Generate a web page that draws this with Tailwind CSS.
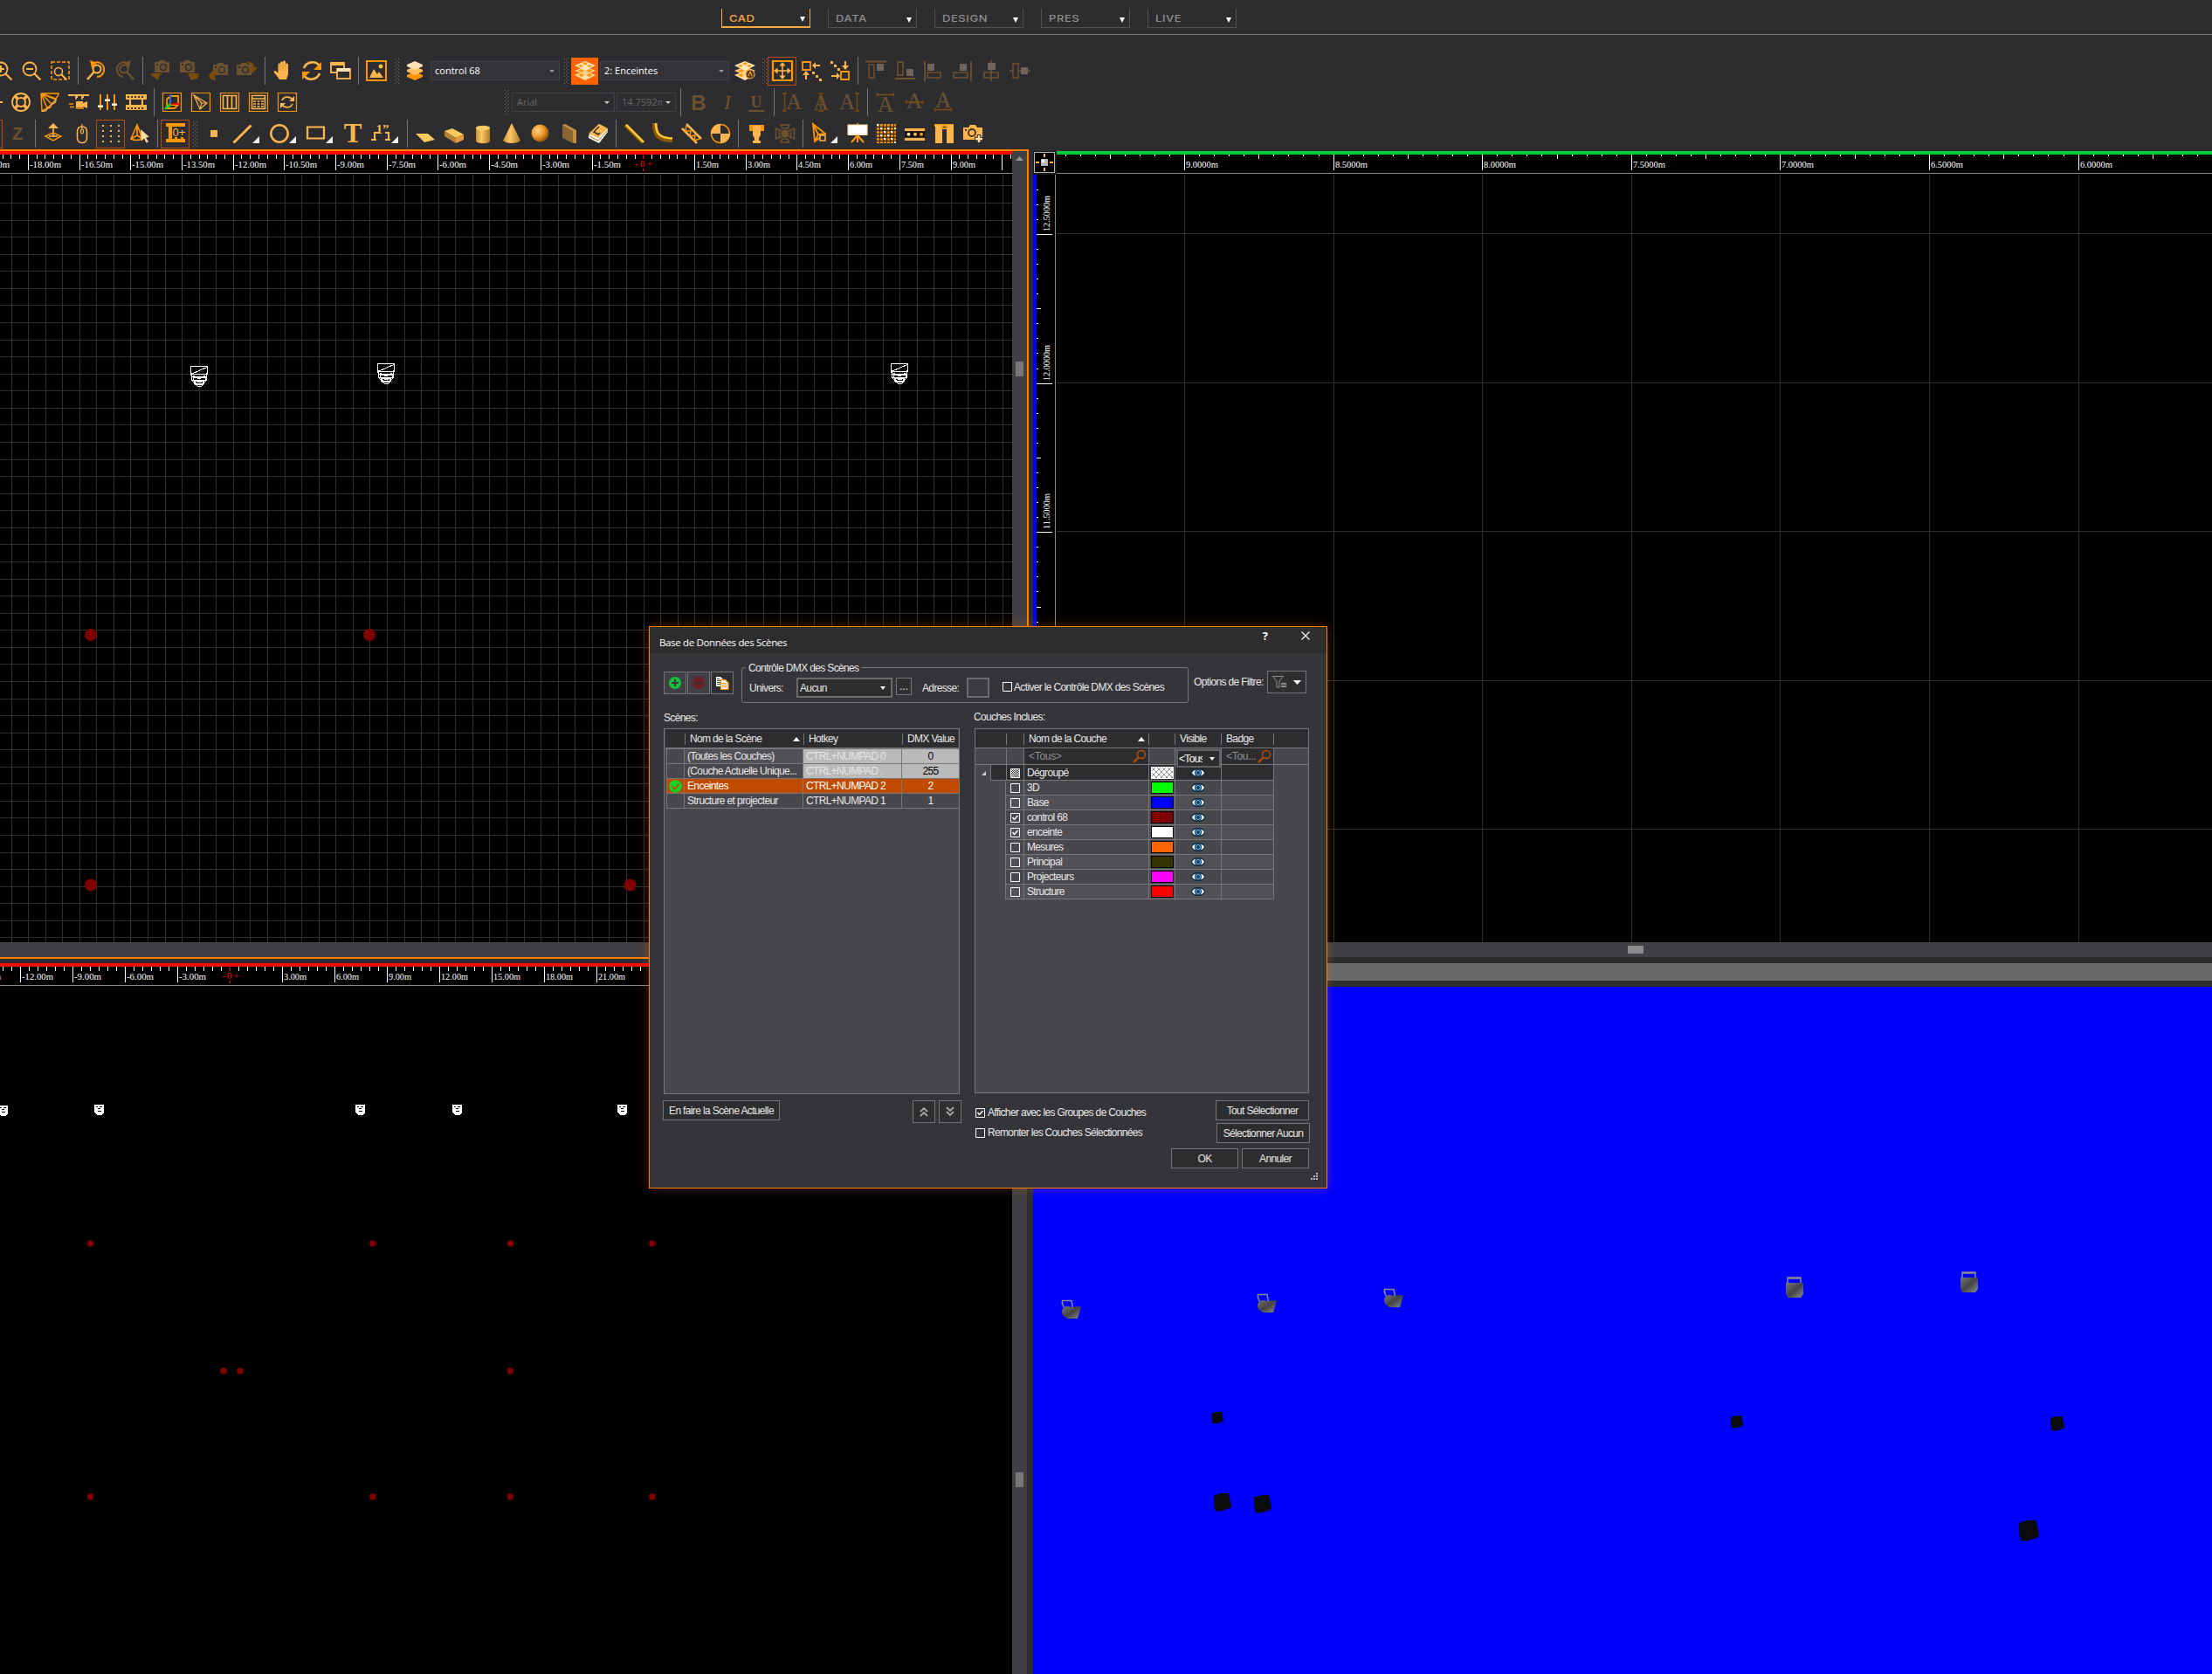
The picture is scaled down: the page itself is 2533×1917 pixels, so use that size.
<!DOCTYPE html>
<html lang="fr">
<head>
<meta charset="utf-8">
<title>Base de Données des Scènes</title>
<script src="https://cdn.jsdelivr.net/npm/@tailwindcss/browser@4"></script>
</head>
<body class="w-[2533px] h-[1917px] overflow-hidden bg-[#2d2d2f] relative font-['Liberation_Sans',sans-serif] text-xs text-[#e8e8e8]">

<svg class="absolute w-0 h-0">
  <defs>
    <linearGradient id="gold" x1="0" y1="0" x2="1" y2="0"><stop offset="0" stop-color="#c98f35"/><stop offset=".4" stop-color="#ffc865"/><stop offset="1" stop-color="#b37a2a"/></linearGradient>
    <radialGradient id="ball" cx=".35" cy=".35" r=".7"><stop offset="0" stop-color="#ffd28a"/><stop offset=".5" stop-color="#f39c2c"/><stop offset="1" stop-color="#8a4e08"/></radialGradient>
    <linearGradient id="steel" x1="0" y1="0" x2="1" y2="1"><stop offset="0" stop-color="#777"/><stop offset=".5" stop-color="#444"/><stop offset="1" stop-color="#8a8a8a"/></linearGradient>
    <pattern id="hatch" width="6" height="6" patternUnits="userSpaceOnUse"><rect width="6" height="6" fill="#fff"/><path d="M0 0l6 6M6 0l-6 6" stroke="#777" stroke-width=".8"/></pattern>
    <pattern id="dither" width="2" height="2" patternUnits="userSpaceOnUse"><rect width="2" height="2" fill="#fff"/><rect width="1" height="1" fill="#333"/><rect x="1" y="1" width="1" height="1" fill="#333"/></pattern>
    <pattern id="dots" width="4" height="4" patternUnits="userSpaceOnUse"><rect width="1" height="1" fill="#6c6c6c"/><rect x="2" y="2" width="1" height="1" fill="#6c6c6c"/></pattern>
  </defs>
</svg>

<header class="h-[171px] flex flex-col">
  <nav class="h-10 border-b border-[#757577] pl-[826px] flex items-end gap-5 pb-[7px] font-['Inter',sans-serif]" id="menu"></nav>
  <div class="h-[23px]"></div>
  <div id="row1" class="h-9 flex items-center -ml-[14px]"></div>
  <div id="row2" class="h-9 flex items-center -ml-[26px]"></div>
  <div id="row3" class="h-9 flex items-center -ml-[30px]"></div>
</header>

<main class="h-[1746px] flex flex-col gap-[5px]">
  <div class="flex gap-[5px] h-[927px]">
    <section class="w-[1178px] border-t-2 border-r-2 border-b-2 border-[#ff8000] flex flex-col">
      <div class="flex h-[906px]">
        <svg id="plan" width="1159" height="906" viewBox="0 173 1159 906" class="bg-black shrink-0" shape-rendering="crispEdges"></svg>
        <div class="w-[17px] bg-[#414044] flex flex-col items-center">
          <svg width="9" height="5" viewBox="0 0 9 5" class="mt-[6px]"><path d="M4.500 0L9 5H0z" fill="#999"/></svg>
          <div class="w-[9px] h-[17px] bg-[#777] mt-[230px]"></div>
        </div>
      </div>
      <div class="h-[17px] bg-[#414044]"></div>
    </section>
    <section class="w-[1350px] pt-[2px] flex flex-col">
      <svg id="side" width="1350" height="906" viewBox="1183 173 1350 906" class="bg-black shrink-0" shape-rendering="crispEdges"></svg>
      <div class="h-[17px] bg-[#414044] flex items-center"><div class="w-[18px] h-[9px] bg-[#8a8a8a] ml-[681px]"></div></div>
    </section>
  </div>
  <div class="flex h-[814px]">
    <svg id="front" width="1159" height="814" viewBox="0 1103 1159 814" class="bg-black shrink-0" shape-rendering="crispEdges"></svg>
    <div class="w-[17px] bg-[#414044] flex justify-center"><div class="w-[9px] h-[17px] bg-[#777] mt-[583px]"></div></div>
    <section class="ml-[7px] w-[1350px] flex flex-col">
      <div class="h-5 bg-[#69696a] mb-[7px]"></div>
      <svg id="view3d" width="1350" height="787" viewBox="1183 1130 1350 787" class="bg-[#0000ff]"></svg>
    </section>
  </div>
</main>

<div role="dialog" class="absolute left-[743px] top-[717px] w-[777px] h-[644px] border border-[#ff8000] bg-[#353438] shadow-[0_0_12px_rgba(255,110,0,0.3)] tracking-[-0.65px] leading-[14px]">
  <div class="h-[30px] bg-[#2d2d2e] flex items-start pl-[11px] text-white">
    <span class="mt-[11px] w-[692px] font-['Open_Sans',sans-serif] text-[11.500px] tracking-[-0.350px]">Base de Données des Scènes</span>
    <span class="mt-[3px] font-['Open_Sans',sans-serif] text-[13px] font-bold w-[43px] text-center -ml-[20px]">?</span>
    <svg class="mt-[5px] ml-[20px]" width="10" height="10" viewBox="0 0 10 10"><path d="M.5.5l9 9M9.500.5l-9 9" stroke="#fff" stroke-width="1.200"/></svg>
  </div>

  <div class="h-[62px] pl-4 flex items-start">
    <div class="flex gap-px mt-[21px]">
      <button class="w-[26px] h-[26px] border border-[#747376] bg-[#414044] flex items-center justify-center"><svg width="14" height="14" viewBox="0 0 14 14"><circle cx="7" cy="7" r="7" fill="#0fc43c"/><path d="M7 3v8M3 7h8" stroke="#353438" stroke-width="2"/></svg></button>
      <button class="w-[26px] h-[26px] border border-[#747376] bg-[#414044] flex items-center justify-center"><svg width="14" height="14" viewBox="0 0 14 14"><circle cx="7" cy="7" r="7" fill="#6e1f22"/><path d="M3 7h8" stroke="#353438" stroke-width="2"/></svg></button>
      <button class="w-[26px] h-[26px] border border-[#747376] bg-[#2f2f31] flex items-center justify-center"><svg width="16" height="16" viewBox="0 0 16 16"><path d="M1 1h5l3 3v8H1z" fill="#fff"/><path d="M2 3.500h3M2 5.500h5M2 7.500h5M2 9.500h5" stroke="#555"/><path d="M6.500 4.500h5l3.500 3.500v7.500H6.500z" fill="#fff" stroke="#ff9500" stroke-width="1.300"/><path d="M8 8.500h4M8 10.500h5.500M8 12.500h5.500" stroke="#ff9500"/></svg></button>
    </div>
    <div class="relative ml-[9px] mt-[16px] w-[512px] h-[41px] border border-[#77767a] rounded-[3px] flex items-start pt-[11px] pl-[8px]">
      <span class="absolute left-[4px] -top-[7px] bg-[#353438] px-[3px]">Contrôle DMX des Scènes</span>
      <span class="w-[54px] mt-[5px]">Univers:</span>
      <span class="w-[110px] h-[23px] border-2 border-[#6c6b6e] bg-[#2d2d2f] flex items-center justify-between pl-[2px] pr-[6px]">Aucun<svg width="6" height="4" viewBox="0 0 6 4"><path d="M0 0h6L3 4z" fill="#fff"/></svg></span>
      <span class="ml-[4px] w-[18px] h-5 border border-[#747376] bg-[#2f2f31] text-center tracking-normal leading-[18px]">...</span>
      <span class="ml-[12px] w-[51px] mt-[5px]">Adresse:</span>
      <span class="w-[26px] h-[23px] border-2 border-[#6c6b6e] bg-[#3b3a3e]"></span>
      <span class="ml-[15px] mt-[5px] w-[11px] h-[11px] border border-white"></span>
      <span class="ml-[2px] mt-[4px] whitespace-nowrap">Activer le Contrôle DMX des Scènes</span>
    </div>
    <span class="ml-[6px] mt-[26px] w-[84px] whitespace-nowrap">Options de Filtre:</span>
    <button class="mt-[20px] w-[45px] h-[26px] border border-[#747376] bg-[#2f2f31] flex items-center pl-[5px] gap-[8px]">
      <svg width="16" height="14" viewBox="0 0 16 14" fill="none" stroke="#8f8f8f"><path d="M.5.5h12L8 6v7H5V6z"/><path d="M10 9h6M10 12h6" stroke-width="2"/></svg>
      <svg width="9" height="5" viewBox="0 0 9 5"><path d="M0 0h9L4.500 5z" fill="#fff"/></svg>
    </button>
  </div>

  <div class="h-[24px] pl-4 flex">
    <span class="w-[355px] mt-[5px]">Scènes:</span>
    <span class="mt-[4px]">Couches Inclues:</span>
  </div>

  <div class="pl-4 flex items-start gap-[17px]">
    <div class="w-[339px] h-[419px] border border-[#77767a] bg-[#48474b]">
      <div class="h-[23px] mx-px pl-[2px] pt-px bg-[#2d2d2f] border-b-2 border-[#77767a] grid grid-cols-[21px_136px_113px_64px] items-center">
        <span class="h-[13px] border-r border-[#77767a]"></span>
        <span class="h-[13px] border-r border-[#77767a] pl-[5px] pr-[4px] flex items-center justify-between">Nom de la Scène<svg width="8" height="5" viewBox="0 0 8 5"><path d="M4 0L8 5H0z" fill="#fff"/></svg></span>
        <span class="h-[13px] border-r border-[#77767a] pl-[5px] flex items-center">Hotkey</span>
        <span class="pl-[5px] whitespace-nowrap">DMX Value</span>
      </div>
      <div id="scenes" class="ml-[2px]"></div>
    </div>
    <div class="w-[383px] h-[418px] border border-[#77767a] bg-[#48474b]">
      <div class="h-[22px] pt-px bg-[#2d2d2f] border-b border-[#77767a] grid grid-cols-[36px_20px_143px_30px_53px_60px_39px] items-center">
        <span class="h-[13px] border-r border-[#77767a]"></span>
        <span class="h-[13px] border-r border-[#77767a]"></span>
        <span class="h-[13px] border-r border-[#77767a] pl-[5px] pr-[4px] flex items-center justify-between">Nom de la Couche<svg width="8" height="5" viewBox="0 0 8 5"><path d="M4 0L8 5H0z" fill="#fff"/></svg></span>
        <span class="h-[13px] border-r border-[#77767a]"></span>
        <span class="h-[13px] border-r border-[#77767a] pl-[5px] flex items-center">Visible</span>
        <span class="h-[13px] border-r border-[#77767a] pl-[5px] flex items-center">Badge</span>
      </div>
      <div class="h-[19px] border-b border-[#77767a] grid grid-cols-[36px_20px_143px_30px_53px_60px_39px] text-[#8f8f90]">
        <span class="border-r border-[#77767a]"></span>
        <span class="border-r border-[#77767a]"></span>
        <span class="border-r border-[#77767a] pl-[5px] pr-[2px] flex items-center justify-between bg-[#2d2d2f] tracking-[-0.300px]">&lt;Tous&gt;<svg width="16" height="16" viewBox="0 0 16 16" fill="none" stroke="#c04c00"><circle cx="10" cy="6" r="4.600" stroke-width="1.500"/><path d="M6.500 9.500L1 15" stroke-width="2"/></svg></span>
        <span class="border-r border-[#77767a]"></span>
        <span class="border-r border-[#77767a] relative"><span class="absolute left-px top-px w-[51px] h-[21px] z-10 border-2 border-[#606063] bg-[#2d2d2f] text-white flex items-center pl-px"><span class="w-[27px] overflow-hidden">&lt;Tous&gt;</span><svg class="ml-[8px] shrink-0" width="6" height="4" viewBox="0 0 6 4"><path d="M0 0h6L3 4z" fill="#fff"/></svg></span></span>
        <span class="border-r border-[#77767a] pl-[5px] pr-[2px] flex items-center justify-between bg-[#2d2d2f] tracking-[-0.300px]">&lt;Tou...<svg class="shrink-0" width="16" height="16" viewBox="0 0 16 16" fill="none" stroke="#c04c00"><circle cx="10" cy="6" r="4.600" stroke-width="1.500"/><path d="M6.500 9.500L1 15" stroke-width="2"/></svg></span>
      </div>
      <div id="layers"></div>
    </div>
  </div>

  <div class="pl-[15px] flex items-start h-[108px]">
    <button class="mt-[7px] w-[134px] h-[23px] border border-[#747376] bg-[#2d2d2f] whitespace-nowrap">En faire la Scène Actuelle</button>
    <div class="flex gap-[4px] ml-[152px] mt-[7px]">
      <button class="w-[26px] h-[26px] border border-[#747376] bg-[#2f2f31] flex items-center justify-center"><svg width="12" height="12" viewBox="0 0 12 12" fill="none" stroke="#a8a8a8" stroke-width="1.800"><path d="M2 6l4-4 4 4M2 11l4-4 4 4"/></svg></button>
      <button class="w-[26px] h-[26px] border border-[#747376] bg-[#2f2f31] flex items-center justify-center"><svg width="12" height="12" viewBox="0 0 12 12" fill="none" stroke="#a8a8a8" stroke-width="1.800"><path d="M2 1l4 4 4-4M2 6l4 4 4-4"/></svg></button>
    </div>
    <div class="ml-[16px] w-[224px] pt-[14px] flex flex-col gap-[9px]">
      <label class="flex items-center gap-[3px] h-[14px]"><svg width="11" height="11" viewBox="0 0 11 11" fill="none" stroke="#fff"><path d="M.5.5h10v10H.5z"/><path d="M2.500 5l2 2.500 4-4.500" stroke-width="1.400"/></svg>Afficher avec les Groupes de Couches</label>
      <label class="flex items-center gap-[3px] h-[14px] tracking-[-0.7px]"><svg width="11" height="11" viewBox="0 0 11 11" fill="none" stroke="#fff"><path d="M.5.5h10v10H.5z"/></svg>Remonter les Couches Sélectionnées</label>
    </div>
    <div class="w-[159px] pt-[7px] flex flex-col items-end">
      <button class="w-[107px] h-[23px] mr-px border border-[#747376] bg-[#2d2d2f]">Tout Sélectionner</button>
      <button class="w-[107px] h-[23px] mt-[3px] border border-[#747376] bg-[#2d2d2f] whitespace-nowrap">Sélectionner Aucun</button>
      <div class="flex gap-[4px] mt-[6px] mr-px">
        <button class="w-[77px] h-[23px] border border-[#747376] bg-[#2d2d2f]">OK</button>
        <button class="w-[77px] h-[23px] border border-[#747376] bg-[#2d2d2f]">Annuler</button>
      </div>
      <svg class="mt-[5px] -mr-[9px] shrink-0" width="8" height="8" viewBox="0 0 8 8" fill="#b8b8b8"><path d="M6 0h2v2H6zM6 3h2v2H6zM6 6h2v2H6zM3 3h2v2H3zM3 6h2v2H3zM0 6h2v2H0z"/></svg>
    </div>
  </div>
</div>

<script>
const $ = id => document.getElementById(id);
const L = '#ffb54d', O = '#ff9500', M = '#6e5230';

/* ---------- workspace tabs ---------- */
$('menu').innerHTML = ['CAD','DATA','DESIGN','PRES','LIVE'].map((t,i) => `
  <div class="${i ? 'w-[102px] h-[22px] border-b border-x border-[#515153] text-[#8e8e90]' : 'w-[102px] h-[22px] border-b-2 border-x border-[#ffab40] text-[#ffab40]'} flex items-center justify-between pl-[8px] pr-[5px] text-[11px] font-medium">
    <span class="tracking-[0.500px] scale-x-[1.180] origin-left mt-[2px]">${t}</span><svg width="6" height="6" viewBox="0 0 6 6" class="mt-[4px]"><path d="M0 0h6L3 6z" fill="#fff"/></svg></div>`).join('');

/* ---------- toolbar icons, 24 x 24 ---------- */
const s = (d, c = L, w = 2, x = '') => `<path d="${d}" fill="none" stroke="${c}" stroke-width="${w}" ${x}/>`;
const f = (d, c = L) => `<path d="${d}" fill="${c}"/>`;
const frame = s('M1.500 1.500h21v21h-21z', O, 1.200);
const tx = (t, x, y, z, c, fam = 'Liberation Serif', x2 = '') => `<text x="${x}" y="${y}" font-size="${z}" fill="${c}" text-anchor="middle" font-family="${fam}" ${x2}>${t}</text>`;
const lens = (c, m='') => `<circle cx="10" cy="10" r="7.500" fill="none" stroke="${c}" stroke-width="1.800"/>` + s('M15.500 15.500l7 7', c, 2.200) + m;
const cam = (x, y) => f(`M${x} ${y+2}h4l2-2h5l2 2h4v12h-17z`, M) + `<circle cx="${x+10}" cy="${y+8}" r="3.500" fill="none" stroke="#2d2d2f" stroke-width="1.500"/><rect x="${x+2}" y="${y+4}" width="2" height="2" fill="#2d2d2f"/>`;
const stack = (a, b, c) => f('M3 17l9-4 9 4v2l-9 4-9-4z', c) + f('M3 11l9-4 9 4v2l-9 4-9-4z', b) + f('M3 5l9-4 9 4v2l-9 4-9-4z', a);
const holes = (dx = 0) => f('M0 17l12-5 12 5-12 6z', '#ffe0ac') + f('M4 17l4-2 3 2-3 2zM13 17l4-2 3 2-3 2z', O) + f('M0 12l12-5 12 5-12 5z', '#ffd08a') + f('M4 12l4-2 3 2-3 2zM13 12l4-2 3 2-3 2z', O) + f('M0 6l12-5 12 5-12 6z', '#ffe6bf') + f('M9 4l3-2 3 2-3 1.500zM4 6.500l3-1.500 3 1.500-3 1.500zM14 6.500l3-1.500 3 1.500-3 1.500z', O);
const I = {
  zin: lens(L, s('M6 10h8M10 6v8')), zout: lens(L, s('M6 10h8')),
  zreg: s('M2 2h20v20H2z', O, 1.600, 'stroke-dasharray="4 2"') + `<circle cx="10" cy="13" r="4.500" fill="none" stroke="${L}" stroke-width="1.500"/>` + s('M13 16l6 6', L, 2),
  undo: `<circle cx="13" cy="10" r="4.500" fill="none" stroke="${L}" stroke-width="2"/>` + s('M10 13l-8 9', L, 2.500) + s('M8 4c6-4 14 0 13 8-.5 4-4 7-8 7', O, 2) + f('M5 0l2 9 6-6z', O),
  redo: `<circle cx="11" cy="10" r="4.500" fill="none" stroke="${M}" stroke-width="2"/>` + s('M14 13l8 9', M, 2.500) + s('M16 4C10 0 2 4 3 12c.5 4 4 7 7 7', M, 2) + f('M19 0l-2 9-6-6z', M),
  cam1: cam(5, 0) + f('M1 15h13l-3 2-2 6-8-6z', '#7a4c10'), cam2: cam(1, 0) + f('M10 15h13l-2 6-8 2-1-4z', '#7a4c10'),
  cam3: cam(6, 3) + f('M1 17l6-7 5 6-4 1 1 6-6-1z', '#7a4c10'), cam4: cam(0, 3) + f('M11 2c6-1 9 2 9 6h4l-6 7-5-6 4-1c0-2-2-3-6-6z', '#7a4c10'),
  hand: f('M8 22l-6-8c-1-1.500 1-2.500 2-1.500l2.500 2V5c0-2 2.500-2 2.500 0V3c0-2 3-2 3 0V2c0-2 3-2 3 0v3c0-2 3-2 3 0v11l-2 6z') + s('M9 5v7M12 3v9M15 4v8', '#c47c1c', .7),
  rot: s('M3 9c3-8 14-9 18-2M21 15c-3 8-14 9-18 2', L, 2.600) + f('M23 2v9h-9zM1 22v-9h9z', O),
  wins: s('M1 3h15v11H1z', L, 1.800) + f('M1 2h15v4H1z') + `<rect x="8" y="10" width="15" height="11" fill="#2d2d2f" stroke="${L}" stroke-width="1.800"/>` + f('M8 9h15v4H8z', '#ffe0b0'),
  pic: s('M1 1h22v22H1z', O, 2) + f('M4 20l5-10 4 6 2-3 5 7z') + `<circle cx="17" cy="7" r="2.500" fill="${L}"/>`,
  stack: stack('#ffe3b5', '#ffc062', '#ff9500'), holes: holes(),
  holesA: holes() + `<circle cx="18" cy="16" r="5" fill="#5b3c12" stroke="${L}"/>` + s('M16 18l2-5 2 5', L, 1),
  move: s('M1 1h22v22H1z', O, 2.200) + s('M12 5v14M5 12h14', L, 1.600) + f('M12 2l3.500 4.500h-7zM12 22l3.500-4.500h-7zM2 12l4.500-3.500v7zM22 12l-4.500-3.500v7z'),
  gp1: s('M2 2h9v9H2z', O, 1.800) + s('M22 6h-7M6 22v-7', L, 2) + f('M13 6l4-4v8zM6 12l4 5H2z') + f('M13 13h3v3h-3zM17 17h3v3h-3zM21 21h3v3h-3z'),
  gp2: s('M13 13h9v9h-9z', O, 1.800) + s('M18 1v7M2 18h7', L, 2) + f('M18 11l-4-5h8zM12 18l-4-4v8z') + f('M1 1h3v3H1zM5 5h3v3H5zM9 9h3v3H9z'),
  al1: s('M0 1.500h24', M, 2) + s('M4 5h6v15H4z', M, 1.500) + f('M13 4h8v8h-8z', '#6d655c'), al2: s('M1 21h23', M, 2) + s('M4 2h6v15H4z', M, 1.500) + f('M14 10h8v8h-8z', '#6d655c'),
  al3: s('M2 1v23', M, 1.800) + s('M5 14h15v6H5z', M, 1.500) + f('M5 4h8v8H5z', '#6d655c'), al4: s('M22 1v23', M, 1.800) + s('M2 14h16v6H2z', M, 1.500) + f('M9 4h8v8H9z', '#6d655c'),
  al5: s('M12 0v24', M, 1.600) + s('M4 14h16v6H4z', M, 1.500) + f('M8 3h9v8H8z', '#6d655c'), al6: s('M0 12h24', M, 1.600) + `<rect x="4" y="4" width="6" height="16" fill="#2d2d2f" stroke="${M}" stroke-width="1.500"/>` + f('M13 8h8v8h-8z', '#6d655c'),
  stub: f('M20 11h4v2h-4z'),
  buoy: `<circle cx="12" cy="12" r="10" fill="none" stroke="${L}" stroke-width="1.800"/><circle cx="12" cy="12" r="5" fill="none" stroke="${L}" stroke-width="2"/>` + s('M5 5l3.500 3.500M19 5l-3.500 3.500M5 19l3.500-3.500M19 19l-3.500-3.500', L, 3.500),
  fan: s('M2 2l1 20 6-3zM2 2l7 17 5-5zM2 2l12 12 5-5zM2 2l17 6 3-5V2z', O, 1.400) + s('M3 22c4 1 6-1 6-3M9 19c3 0 5-2 5-5M14 14c3 0 5-2 5-5', L, 1.400),
  proj: s('M0 4h24', L, 2) + s('M9 4v5M16 4v5', L, 1.500) + f('M9 11h8v7H9zM17 13l5-2v8l-5-2z') + s('M8 5.500h3M15 5.500h3', L, 3) + s('M1 14h5M2 17.500h5M9 19h9', O, 1.500),
  mix: s('M4 3v18M12 3v18M20 3v18', O, 2) + f('M1 15.500h6v2.500H1zM9 8.500h6V11H9zM17 13.500h6V16h-6z', '#fff0d8'),
  film: f('M0 3h24v18H0z') + f('M2 5h2v2H2zM6 5h2v2H6zM10 5h2v2h-2zM14 5h2v2h-2zM18 5h2v2h-2zM2 18h2v2H2zM6 18h2v2H6zM10 18h2v2h-2zM14 18h2v2h-2zM18 18h2v2h-2zM0 9h4v6H0zM6 9h12v6H6zM20 9h4v6h-4z', '#2d2d2f'),
  axes: frame + s('M6 9l4-4h9v10l-4 4H6zM10 5v10h9M6 19l4-4', O, 1.800) + s('M10 14V3', '#1266ff', 1.800) + s('M10 14h11', '#f00', 1.800) + s('M10 14l-6 6', '#0d2', 2.500),
  spot: frame + s('M4 4l15 9-8 7z', L, 1.200) + s('M4 4l9 9-2 7M13 13l6 0', L, 1.200),
  cols: frame + s('M4.500 4.500h15v15h-15zM9.500 4v16M14.500 4v16', L, 1.600),
  tbl: frame + s('M4.500 4.500h15v15h-15zM4 8h16', L, 1.500) + s('M6 11h12M6 14h12M6 17h12', L, 1.600, 'stroke-dasharray="3 1.500"'),
  sync: frame + s('M6 10c2-5 9-5 12-1M18 14c-2 5-9 5-12 1', L, 1.700) + f('M20 5v6h-6zM4 19v-6h6z'),
  B: tx('B', 12, 21, 24, M, 'Liberation Sans', 'font-weight="bold"'), Ii: tx('I', 12, 20, 24, M, 'Liberation Serif', 'font-style="italic"'), U: tx('U', 12, 18, 18, M, 'Liberation Serif', 'font-weight="bold"') + s('M3 22h18', M, 2),
  Al: s('M1 2h5M1 22h5M3.500 2v20', '#7a4c10', 1.500) + tx('A', 14, 20, 25, M), Ac: tx('A', 12, 21, 25, M) + s('M9 2h6M9 22h6M12 2v20', '#7a4c10', 1.500), Ar: tx('A', 9, 20, 25, M) + s('M18 2h5M18 22h5M20.500 2v20', '#7a4c10', 1.500),
  At: s('M2 3.500h20M2.500 1.500v4M21.500 1.500v4', '#7a4c10', 1.500) + tx('A', 12, 23, 25, M), Am: tx('A', 12, 19, 25, M) + s('M2 12h20M2.500 10v4M21.500 10v4', '#7a4c10', 1.500), Ab: tx('A', 12, 18, 25, M) + s('M2 20.500h20M2.500 18.500v4M21.500 18.500v4', '#7a4c10', 1.500),
  none: '', Z: tx('Z', 12, 19, 20, M, 'Liberation Sans', 'font-weight="bold"'),
  lift: s('M12 4v12', L, 1.600) + f('M12 0l6 6H6z') + s('M3 15l9-4 9 4-9 5z', O, 1.500) + s('M7 15h10', L, 1.500),
  mouse: s('M12 4c4 0 5.500 3 5.500 6v7c0 3-2 5.500-5.500 5.500S6.500 20 6.500 17v-7c0-3 1.500-6 5.500-6z', L, 1.600) + s('M12 1v7', L, 1.200) + `<rect x="10.500" y="7" width="3" height="5" rx="1.500" fill="none" stroke="${L}" stroke-width="1.200"/>`,
  grid: [2, 11, 20].map(x => [2, 8, 14, 20].map(y => f(`M${x} ${y}h2v2h-2z`)).join('')).join(''),
  cone: s('M9 2L2 18c3 2 9 2 13 0zM9 2l0 12-7 4M9 14l6 4', O, 1.600) + f('M13 7l10 9-4 .5 3 5-2.500 1-2.500-5-3 3z', '#ffdca4'),
  zero: f('M1 0h22v4H1zM1 18h22v4H1zM4 4h4v14H4zM11 16h3v3h-3zM18 16h3v3h-3z', O) + tx('0+', 16, 14.500, 13, L, 'Liberation Sans'),
  pt: f('M8 8h8v8H8z'), line: s('M1.500 22.500l20-20', L, 3), circ: `<circle cx="12" cy="12" r="9.700" fill="none" stroke="${L}" stroke-width="2.500"/>`,
  rect: s('M2 4.500h19v13H2z', L, 2.200), T: tx('T', 12, 22, 31, L, 'Liberation Serif', 'font-weight="bold"'),
  dim: s('M4 20V11h5M20 20V11h-4M0 19h6M16 19h6', L, 2) + tx('1”', 13, 12, 15, L, 'Liberation Serif', 'font-weight="bold"'),
  plane: f('M1 12l14 0 8 7-12 3z', '#ffc95c'),
  box: f('M1 9l9-3 13 7-9 4z', '#ffc95c') + f('M1 9l13 8v6L1 15z', '#b9802f') + f('M14 17l9-4v6l-9 4z', '#e09d3d'),
  cyl: `<path d="M4 5v16c3 3 13 3 16 0V5z" fill="url(#gold)"/><ellipse cx="12" cy="5.500" rx="8" ry="2.700" fill="#ffc962"/>`,
  con: `<path d="M12 0L2 20c4 4 16 4 20 0z" fill="url(#gold)"/>`, ball: `<circle cx="11.500" cy="11.500" r="10" fill="url(#ball)"/>`,
  wall: f('M4 2l3-1 13 7v15l-3 0z', '#c48f42') + f('M4 2l12 7v14L4 17z', '#8a6431'),
  book: f('M1 14l12-13 10 6v3L13 23 1 17z', '#fff') + f('M1 12L13 1l10 5L12 17z', L) + s('M13 4l-6 6 5 3 2-2', '#2d2d2f', 1.500) + s('M2 15l10 5 11-12', '#b4721c', 1),
  pipe: s('M2 2l20 20', '#7a4d00', 5) + s('M3 2l20 20', '#ffc83a', 2.500), bend: s('M3 0c0 14 4 19 20 19', '#8a5800', 6) + s('M4 0c0 13 5 17 19 17.500', '#ffc83a', 2.500),
  truss: s('M6 1l17 17M1 6l17 17', L, 2.500) + s('M6 3L5 9l6 0-1 6 6-1-1 6 6-2', O, 1.500),
  target: `<circle cx="12" cy="12" r="10.500" fill="none" stroke="${O}" stroke-width="1.500"/>` + f('M12 12V1A11 11 0 0 0 1 12zM12 12v11a11 11 0 0 0 11-11z'),
  cup: f('M4 2h17v7h-5V5H9v4H4z', O) + f('M8 3h9v11l-2 3v3h2v3H8v-3h2v-3l-2-3z'),
  lamp: `<circle cx="12" cy="12" r="4.500" fill="${M}"/>` + s('M7 2h10l-2 4H9zM7 22h10l-2-4H9zM1.500 6v12l4-2V8zM22.500 6v12l-4-2V8z', M, 1.500) + s('M6 7l2 2M18 7l-2 2M6 17l2-2M18 17l-2-2', M, 1.500),
  pyr: s('M3 1l14 11-12 9zM3 1l6 12 8-1M5 21l4-8', O, 1.800) + `<rect x="11" y="14" width="6" height="6" fill="#2d2d2f" stroke="${L}" stroke-width="1.500"/>`,
  easel: f('M1 2h22v12H1z', '#fff') + s('M1 2h22v11H1z', '#ffd9a0', 1.200) + s('M12 0v2M12 14v8M12 14l-7 8M12 14l7 8', O, 2),
  mat: f('M1 1h22v22H1z', '#ff9a10') + s('M1 4.500h22M1 8.500h22M1 12.500h22M1 16.500h22M1 20.500h22M4.500 1v22M8.500 1v22M12.500 1v22M16.500 1v22M20.500 1v22', '#3a2a14', 1.300) + f('M1 1h2v2H1zM5 5h2v2H5zM13 5h2v2h-2zM17 9h2v2h-2zM9 9h2v2H9zM13 13h2v2h-2zM5 13h2v2H5zM9 17h2v2H9zM17 17h2v2h-2zM21 5h2v2h-2zM21 21h2v2h-2z', '#fff'),
  strip: f('M0 6h23v3H0zM0 17h23v3H0z') + f('M0 9.500h23v6.500H0z', '#111') + `<circle cx="4.500" cy="12.700" r="2" fill="#ffe0b0"/><circle cx="12" cy="12.700" r="2" fill="${L}"/><circle cx="19" cy="12.700" r="2" fill="${O}"/>`,
  drape: f('M1 1h22v3H1z', O) + f('M2 2h8v21H2zM15 2h8v21h-8z') + s('M9 4c2 3 5 3 7 0', O, 2),
  camp: f('M1 5h6l2-3h6l2 3h6v14H1z') + `<circle cx="11" cy="11" r="4" fill="none" stroke="#4a3010" stroke-width="1.800"/><path d="M3 7h2v2H3z" fill="#4a3010"/>` + s('M19 13v10M14 18h10', '#2d2d2f', 4.500) + s('M19 14v8M15 18h8', '#ffdca4', 2.500),
};
const svg = n => `<svg width="24" height="24" viewBox="0 0 24 24" class="overflow-visible shrink-0">${I[n]}</svg>`;
const cell = n => `<span class="w-[33px] h-[33px] shrink-0 flex items-center justify-center">${svg(n)}</span>`;
const on = n => `<span class="w-[33px] h-[33px] shrink-0 flex items-center justify-center border border-[#bf4a00]">${svg(n)}</span>`;
const dd = n => `<span class="w-[42px] h-[33px] shrink-0 flex items-center pl-[5px]">${svg(n)}<svg width="8" height="8" viewBox="0 0 8 8" class="mt-[14px] -ml-[1px]"><path d="M8 0v8H0z" fill="#eee"/></svg></span>`;
const sep = '<span class="w-[8px] shrink-0 h-8 flex justify-center"><i class="w-px bg-[#767678]"></i></span>';
const grip = '<svg width="5" height="29" class="shrink-0"><rect width="5" height="29" fill="url(#dots)"/></svg>';
const down = c => `<svg width="6" height="3" viewBox="0 0 6 3"><path d="M0 0h6L3 3z" fill="${c}"/></svg>`;
const cells = a => a.split(' ').map(n => n === '|' ? sep : n.endsWith('!') ? on(n.slice(0, -1)) : n.endsWith('>') ? dd(n.slice(0, -1)) : cell(n)).join('');
const combo = t => `<span class="w-[148px] h-[22px] shrink-0 border border-[#424147] bg-[#333236] flex items-center justify-between pl-[4px] pr-[5px] text-white text-[11px] font-['Open_Sans',sans-serif]">${t}${down('#999')}</span>`;

$('row1').innerHTML = cells('zin zout zreg | undo redo | cam1 cam2 cam3 cam4 | hand rot wins | pic') +
  `<i class="w-[5px] shrink-0"></i>${grip}<i class="w-[1px] shrink-0"></i>${cell('stack')}<i class="w-[2px] shrink-0"></i>${combo('control 68')}
   <i class="w-[5px] shrink-0"></i>${grip}<i class="w-[3px] shrink-0"></i><span class="w-[31px] h-[31px] bg-[#ff6400] flex items-center justify-center shrink-0">${svg('holes')}</span><i class="w-[2px] shrink-0"></i>${combo('2: Enceintes')}<i class="w-px shrink-0"></i>${cell('holesA')}<i class="w-[4px] shrink-0"></i>${grip}<i class="w-px shrink-0"></i>` +
  cells('move! gp1 gp2 | al1 al2 al3 al4 al5 al6');

$('row2').innerHTML = cells('stub buoy fan proj mix film | axes spot cols tbl sync') +
  `<i class="w-[233px] shrink-0"></i>${grip}<i class="w-[3px] shrink-0"></i>
   <span class="w-[118px] h-[22px] shrink-0 border border-[#424147] flex items-center justify-between pl-[5px] pr-[5px] text-[#68676a] text-[11px] font-['Open_Sans',sans-serif]">Arial${down('#ccc')}</span><i class="w-[2px] shrink-0"></i>
   <span class="w-[68px] h-[22px] shrink-0 border border-[#424147] flex items-center justify-between pl-[5px] pr-[5px] text-[#68676a] text-[11px] font-['Open_Sans',sans-serif]"><span class="w-[46px] overflow-hidden">14.7592m</span>${down('#ccc')}</span><i class="w-px shrink-0"></i>` +
  cells('| B Ii U | Al Ac Ar | At Am Ab');

$('row3').innerHTML = cells('none! Z | lift mouse grid! cone | zero!') +
  `<i class="w-[4px] shrink-0"></i>${grip}<i class="w-[2px] shrink-0"></i>` +
  cells('pt line> circ> rect> T dim> | plane box cyl con ball wall book | pipe bend truss target | cup lamp | pyr> easel mat strip drape camp');

/* ---------- viewports ---------- */
const R = (x, y, w, h, c) => `<rect x="${x}" y="${y}" width="${w}" height="${h}" fill="${c}"/>`;
const label = (t, x, y, len) => `<text x="${x}" y="${y}" font-size="11" fill="#fff" font-family="Liberation Serif" textLength="${len}" lengthAdjust="spacingAndGlyphs">${t}</text>`;
const zero = (x, y) => `<text x="${x}" y="${y}" font-size="11" fill="#f00" font-family="Liberation Serif" text-anchor="middle" textLength="20">- 0 +</text>`;
function ruler(top, origin, step, unit, from, to, skip) {
  let o = R(0, top, 1159, 4, '#f00') + R(0, top + 25, 1159, 1, '#8a8a8a');
  for (let k = from * 6; k <= to * 6; k++) {
    const x = Math.round(origin + k * step / 6);
    if (x < -40 || x > 1158) continue;
    const major = k % 6 === 0;
    if (k === 0) { o += R(x, top + 4, 1, 5, '#f00') + R(x, top + 20, 1, 3, '#f00') + zero(x + 1, top + 18); continue; }
    o += R(x, top + 4, 1, major ? 18 : 5, '#fff');
    if (major && k / 6 !== skip) { const t = (k / 6 * unit).toFixed(2) + 'm'; o += label(t, x + 2, top + 19, Math.round(t.length * 5.100)); }
  }
  return o;
}
const fixture = (x, y) => `<g transform="translate(${x} ${y})" fill="none" stroke="#fff" stroke-width="1"><path d="M.5.5h19v8l-1 4h-17l-1-4zM0 9.500h20M2 9L19 1.500M1.500 8v8l4 5h9l4-5V8"/><path d="M3 13h14v3H3zM4 17h12l-2 3H6zM6 19.500l2 3.500h5l2-3.500M3 11l7 4 7-4M7 12h6M8 18h5"/></g>`;
const small = (x, y) => `<g transform="translate(${x} ${y})"><path d="M0 0h11v9l-2 3H3L0 9z" fill="#fff"/><path d="M2 2h2v1H2zM6 2h3v1H6zM4 4h3v1H4zM4 7h4v1H4z" fill="#000"/></g>`;
const dot = (x, y, r) => `<circle cx="${x}" cy="${y}" r="${r}" fill="#800000" shape-rendering="auto"/>`;

let p = '';
for (let x = 12.5; x < 1159; x += 19.57) p += R(Math.round(x), 200, 1, 879, '#303030');
for (let y = 212.4; y < 1079; y += 19.57) p += R(0, Math.round(y), 1159, 1, '#303030');
p += ruler(173, 736.3, 58.7, 1.5, -13, 8, 7);
[[218, 419], [432, 416], [1020, 416]].forEach(a => p += fixture(...a));
[[104, 727], [423, 727], [104, 1013.5], [721.5, 1013.5]].forEach(a => p += dot(...a, 7));
$('plan').innerHTML = p;

let q = ruler(1103, 263.3, 60, 3, -5, 8);
[[108, 1265], [407, 1265], [518, 1265], [707, 1265], [-2, 1266]].forEach(a => q += small(...a));
[[103.5, 1424], [427, 1424], [584.5, 1424], [747, 1424], [256, 1570], [275, 1570], [584.5, 1570], [103.5, 1714], [427, 1714], [584.5, 1714], [747, 1714]].forEach(a => q += dot(...a, 3.8));
$('front').innerHTML = q;

let g = R(1210, 173, 1323, 4, '#0c3') + R(1210, 198, 1323, 1, '#8a8a8a') + R(1183, 200, 4, 879, '#00f') + R(1208, 200, 1, 879, '#8a8a8a') + R(1183, 173, 27, 27, '#1c1c1c') +
  `<rect x="1184.500" y="174.500" width="23" height="23" fill="#000" stroke="#b0b0b0"/>` + R(1192, 182, 8, 8, '#b8b8b8') + R(1193, 183, 3, 3, '#fff') +
  R(1195, 176, 2, 4, L) + R(1195, 192, 2, 4, L) + R(1186, 185, 4, 2, L) + R(1202, 185, 4, 2, L);
for (let k = -8; k < 70; k++) {
  const x = Math.round(1356 + k * 17.06);
  if (k % 10 === 0) g += R(x, 200, 1, 879, '#303030') + R(x, 177, 1, 18, '#fff') + label((9 - k / 20).toFixed(4) + 'm', x + 2, 192, 37);
  else g += R(x, 177, 1, k % 5 ? 2 : 5, '#fff');
}
for (let k = -3; k < 48; k++) {
  const y = Math.round(268 + k * 17.06);
  if (k % 10 === 0) g += R(1210, y - 1, 1323, 1, '#303030') + R(1187, y, 18, 1, '#fff') + `<text transform="translate(1202 ${y - 3}) rotate(-90)" font-size="11" fill="#fff" font-family="Liberation Serif" textLength="41" lengthAdjust="spacingAndGlyphs">${(12.5 - k / 20).toFixed(4)}m</text>`;
  else g += R(1187, y, k % 5 ? 2 : 5, 1, '#fff');
}
$('side').innerHTML = g;

const kettle = (x, y) => `<g transform="translate(${x} ${y})"><path d="M1.500 6V1.500H12l2 11M1 3l2 6" fill="none" stroke="#8c8c8c" stroke-width="1.500"/><path d="M1 14C2 8 6 7 12 9l11-1-4 14H8C3 20 1 17 1 14z" fill="url(#steel)"/></g>`;
const bucket = (x, y) => `<g transform="translate(${x} ${y})"><path d="M2 8V2h15v6M2 3h15" fill="none" stroke="#8c8c8c" stroke-width="1.500"/><path d="M0 8h20v13l-3 4H2L0 20z" fill="url(#steel)"/></g>`;
const cube = (x, y, w) => `<path transform="translate(${x} ${y}) scale(${w / 20})" d="M0 3C5 0 12-.5 17 0l3 14c0 3-1 3-4 4l-8 2.500-6 0c-2-6-2-11-2-17.500z" fill="#0b0b0d"/>`;
$('view3d').innerHTML = kettle(1215, 1488) + kettle(1439, 1481) + kettle(1584, 1475) + bucket(2045, 1461) + bucket(2245, 1455) +
  cube(1387.5, 1616.5, 13.5) + cube(1390, 1710, 20) + cube(1436, 1712, 20) + cube(1982, 1621, 14) + cube(2348, 1622, 16) + cube(2312, 1741, 23);

/* ---------- dialog tables ---------- */
$('scenes').innerHTML = [['(Toutes les Couches)', 'CTRL+NUMPAD 0', '0', 'l'], ['(Couche Actuelle Unique...', 'CTRL+NUMPAD .', '255', 'l'], ['Enceintes', 'CTRL+NUMPAD 2', '2', 's'], ['Structure et projecteur', 'CTRL+NUMPAD 1', '1', '']].map(([n, h, v, k], i) => {
  const hot = k === 'l' ? 'bg-[#bababa] text-[#e6e6e6]' : '', val = k === 'l' ? 'bg-[#bababa] text-black' : '';
  return `<div class="h-[17px] border-b border-l border-[#77767a] grid grid-cols-[20px_136px_113px_65px] leading-[16px] whitespace-nowrap ${k === 's' ? 'bg-[#bf4a00] text-white' : i === 0 ? 'bg-[#515054]' : ''}">
    <span class="border-r border-[#77767a] flex items-center pl-[2px] pr-px ${k === 's' ? '' : 'bg-[#48474b]'}">${k === 's' ? '<svg width="15" height="15" viewBox="0 0 15 15"><circle cx="7.500" cy="7.500" r="7.300" fill="#17cf2a"/><path d="M3.500 7l3 3.500 5-5.500" fill="none" stroke="#bf4a00" stroke-width="1.800"/></svg>' : ''}</span>
    <span class="border-r border-[#77767a] pl-[3px]">${n}</span><span class="border-r border-[#77767a] pl-[3px] ${hot}">${h}</span><span class="text-center ${val}">${v}</span></div>`;
}).join('');

const box = c => `<svg width="11" height="11" viewBox="0 0 11 11" fill="none" stroke="#fff"><path d="M.5.5h10v10H.5z" ${c === 2 ? 'fill="url(#dither)"' : ''}/>${c === 1 ? '<path d="M2.500 5l2 2.500 4-4.500" stroke-width="1.400"/>' : ''}</svg>`;
const eye = '<svg width="16" height="10" viewBox="0 0 16 10"><path d="M0 5C1 1 4 0 8 0s7 1 8 5c-1 4-4 5-8 5S1 9 0 5z" fill="#0d2c47"/><path d="M1 5C2 2.500 4 1.500 8 1.500S14 2.500 15 5c-1 2.500-3 3.500-7 3.500S2 7.500 1 5z" fill="#fff"/><circle cx="8" cy="5" r="4" fill="#0e3f66"/><circle cx="8" cy="5" r="2.500" fill="none" stroke="#7fb4d6"/></svg>';
$('layers').innerHTML = [['Dégroupé', 'hatch', 2], ['3D', '#00ff00', 0], ['Base', '#0000ff', 0], ['control 68', '#800000', 1], ['enceinte', '#ffffff', 1], ['Mesures', '#ff6600', 0], ['Principal', '#333300', 0], ['Projecteurs', '#ff00ff', 0], ['Structure', '#ff0000', 0]].map(([n, c, k], i) => `
  <div class="flex ${i ? 'h-[17px]' : 'h-[18px]'}">
    <span class="${i ? 'w-[34px]' : 'w-[17px] flex items-center pl-[7px]'}">${i ? '' : '<svg width="5" height="5" viewBox="0 0 5 5"><path d="M5 0v5H0z" fill="#ccc"/></svg>'}</span>
    <div class="border-l border-b border-[#77767a] grid ${i ? 'grid-cols-[21px_143px_30px_53px_60px]' : 'grid-cols-[18px_20px_143px_30px_53px_60px] bg-[#2d2d2f]'} ${i && i % 2 === 0 ? 'bg-[#515054]' : ''} ${i ? 'leading-[16px]' : 'leading-[18px]'}">
      ${i ? '' : '<span class="border-r border-[#77767a]"></span>'}
      <span class="border-r border-[#77767a] flex items-center justify-end pr-[4px]">${box(k)}</span>
      <span class="border-r border-[#77767a] pl-[3px]">${n}</span>
      <span class="border-r border-[#77767a] flex items-center pl-[2px]"><svg width="26" height="14"><rect x=".5" y=".5" width="25" height="13" fill="${i ? c : 'url(#hatch)'}" stroke="${i ? '#000' : '#fff'}"/></svg></span>
      <span class="border-r border-[#77767a] flex items-center justify-center">${eye}</span>
      <span class="border-r border-[#77767a]"></span>
    </div>
  </div>`).join('');
</script>
</body>
</html>
